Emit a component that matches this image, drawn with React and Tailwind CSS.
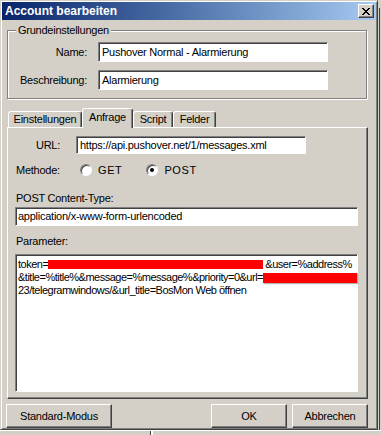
import React from 'react';

const raised = 'border border-t-white border-l-white border-r-[#404040] border-b-[#404040] shadow-[inset_-1px_-1px_0_#808080]';
const sunken = 'border border-t-[#808080] border-l-[#808080] border-r-white border-b-white shadow-[inset_1px_1px_0_#404040] bg-white';

const Radio = ({ checked }) => (
  <span className="w-[12px] h-[12px] rounded-full border border-t-[#808080] border-l-[#808080] border-r-white border-b-white bg-white shadow-[inset_1px_1px_0_#404040] flex items-center justify-center">
    {checked && <span className="w-[4px] h-[4px] rounded-full bg-black" />}
  </span>
);

const Tab = ({ label, width, active }) =>
  active ? (
    <div
      className={`${width} h-[20px] -mb-px relative z-10 bg-[#d4d0c8] border-t border-l border-r border-t-white border-l-white border-r-[#404040] rounded-t-[3px] shadow-[inset_-1px_0_0_#808080] flex justify-center pt-[2px]`}
    >
      {label}
    </div>
  ) : (
    <div
      className={`${width} h-[16px] border-t border-l border-r border-t-white border-l-white border-r-[#404040] rounded-t-[3px] shadow-[inset_-1px_0_0_#808080] flex justify-center pt-[1px]`}
    >
      {label}
    </div>
  );

export default function App() {
  return (
    <div className="w-[381px] h-[435px] bg-[#d4d0c8] flex flex-col overflow-hidden font-['Liberation_Sans',Arial,sans-serif] text-[11px] tracking-[-0.25px] text-black leading-[13px]">
      <div className="flex">
        {/* dialog */}
        <div className="w-[378px] h-[430px] shrink-0 border border-t-[#d4d0c8] border-l-[#d4d0c8] border-r-[#404040] border-b-[#404040] shadow-[inset_1px_1px_0_#fff,inset_-1px_-1px_0_#808080] p-[1px] flex flex-col">
          {/* title bar */}
          <div className="h-[18px] bg-gradient-to-r from-[#0a246a] to-[#a6caf0] flex items-center justify-between pl-[3px] pr-[2px]">
            <span className="text-white font-bold text-[12px] tracking-[0px]">Account bearbeiten</span>
            <button className={`w-[16px] h-[14px] bg-[#d4d0c8] ${raised} flex items-center justify-center`}>
              <svg width="8" height="7" viewBox="0 0 8 7" shapeRendering="crispEdges">
                <path d="M0 0h2v1h-2zM1 1h2v1h-2zM2 2h4v1h-4zM3 3h2v1h-2zM2 4h4v1h-4zM1 5h2v1h-2zM0 6h2v1h-2zM6 0h2v1h-2zM5 1h2v1h-2zM5 5h2v1h-2zM6 6h2v1h-2z" fill="#000" />
              </svg>
            </button>
          </div>

          {/* Grundeinstellungen */}
          <div className="relative ml-[5px] mt-[10px] w-[360px] h-[69px] border border-[#808080] shadow-[inset_1px_1px_0_#fff,1px_1px_0_#fff] pt-[11px] flex flex-col gap-[8px]">
            <span className="absolute -top-[7px] left-[8px] px-[2px] bg-[#d4d0c8]">Grundeinstellungen</span>
            <div className="flex items-center">
              <span className="w-[79px] text-right">Name:</span>
              <div className={`ml-[11px] w-[230px] h-[20px] ${sunken} flex items-center pl-[3px]`}>Pushover Normal - Alarmierung</div>
            </div>
            <div className="flex items-center">
              <span className="w-[79px] text-right">Beschreibung:</span>
              <div className={`ml-[11px] w-[230px] h-[20px] ${sunken} flex items-center pl-[3px]`}>Alarmierung</div>
            </div>
          </div>

          {/* tabs */}
          <div className="ml-[6px] mt-[9px] h-[19px] flex items-end">
            <Tab label="Einstellungen" width="w-[74px]" />
            <Tab label="Anfrage" width="w-[51px]" active />
            <Tab label="Script" width="w-[40px]" />
            <Tab label="Felder" width="w-[43px]" />
          </div>
          <div className="ml-[5px] w-[361px] h-[272px] border border-t-white border-l-white border-r-[#404040] border-b-[#404040] shadow-[inset_-1px_-1px_0_#808080] flex flex-col">
            <div className="mt-[8px] flex items-center">
              <span className="w-[52px] text-right">URL:</span>
              <div className={`ml-[16px] w-[230px] h-[18px] ${sunken} flex items-center pl-[3px]`}>https://api.pushover.net/1/messages.xml</div>
            </div>
            <div className="mt-[9px] h-[14px] flex items-center">
              <span className="ml-[8px] w-[64px]">Methode:</span>
              <Radio />
              <span className="ml-[6px] tracking-[0.6px]">GET</span>
              <span className="ml-[24px]"><Radio checked /></span>
              <span className="ml-[6px] tracking-[0.6px]">POST</span>
            </div>
            <div className="mt-[15px] ml-[8px]">POST Content-Type:</div>
            <div className={`mt-[2px] ml-[7px] w-[343px] h-[19px] ${sunken} flex items-center pl-[2px]`}>application/x-www-form-urlencoded</div>
            <div className="mt-[9px] ml-[8px]">Parameter:</div>
            <div className={`mt-[6px] ml-[7px] w-[343px] h-[138px] ${sunken} pt-[3px] pl-[2px] whitespace-nowrap tracking-[-0.5px]`}>
              <div className="flex items-center">
                <span>token=</span>
                <span className="inline-block w-[215px] h-[9px] bg-[#ff0000]" />
                <span className="ml-[2px]">&amp;user=%address%</span>
              </div>
              <div className="flex items-center">
                <span>&amp;title=%title%&amp;message=%message%&amp;priority=0&amp;url=</span>
                <span className="inline-block w-[96px] h-[10px] bg-[#ff0000] shadow-[1px_1px_1px_#b0b0b0]" />
              </div>
              <div>23/telegramwindows/&amp;url_title=BosMon Web öffnen</div>
            </div>
          </div>

          {/* buttons */}
          <div className="mt-[5px] flex items-center">
            <button className={`ml-[4px] w-[106px] h-[24px] ${raised}`}>Standard-Modus</button>
            <button className={`ml-auto w-[76px] h-[24px] ${raised}`}>OK</button>
            <button className={`ml-[5px] mr-[8px] w-[76px] h-[24px] ${raised}`}>Abbrechen</button>
          </div>
        </div>
        {/* background window to the right */}
        <div className="flex-1 h-[430px] flex">
          <div className="w-[1px]" />
          <div className="w-[1px] mt-[8px] bg-[#404040]" />
        </div>
      </div>
      {/* background below */}
      <div className="flex-1 border-t border-white flex">
        <div className="ml-[150px] w-[1px] bg-[#404040]" />
        <div className="w-[2px] bg-white" />
      </div>
    </div>
  );
}
